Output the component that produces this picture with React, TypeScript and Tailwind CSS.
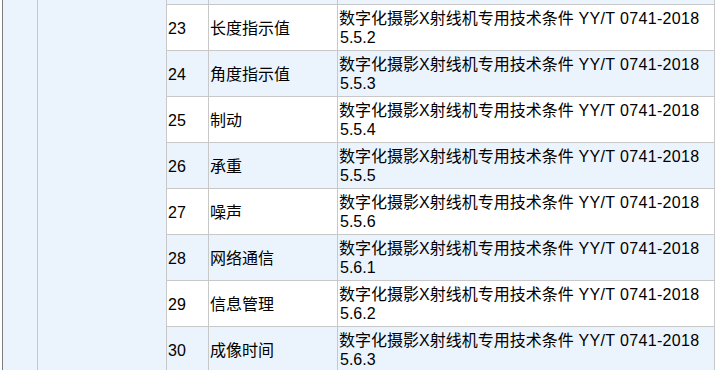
import React from "react";

const rows = [
  { n: "23", name: "长度指示值", sec: "5.5.2" },
  { n: "24", name: "角度指示值", sec: "5.5.3" },
  { n: "25", name: "制动", sec: "5.5.4" },
  { n: "26", name: "承重", sec: "5.5.5" },
  { n: "27", name: "噪声", sec: "5.5.6" },
  { n: "28", name: "网络通信", sec: "5.6.1" },
  { n: "29", name: "信息管理", sec: "5.6.2" },
  { n: "30", name: "成像时间", sec: "5.6.3" },
];

export default function App() {
  return (
    <div
      className="w-[717px] h-[370px] overflow-hidden bg-white flex text-[16px] text-black"
      style={{ fontFamily: '"Liberation Sans", Arial, "Noto Sans CJK SC", sans-serif' }}
    >
      <div className="ml-[2px] w-[1px] shrink-0 bg-[#7d7d7d]" />
      <div className="w-[35px] shrink-0 bg-[#ebf4fd] border-r border-[#c8c8c8]" />
      <div className="w-[129px] shrink-0 bg-[#ebf4fd] border-r border-[#c8c8c8]" />
      <div className="w-[548px] shrink-0 flex flex-col border-r border-[#c8c8c8]">
        <div className="h-[4px] shrink-0 flex bg-[#ebf4fd]">
          <div className="w-[42px] border-r border-[#c8c8c8]" />
          <div className="w-[129px] border-r border-[#c8c8c8]" />
          <div className="flex-1" />
        </div>
        {rows.map((r, i) => (
          <div
            key={r.n}
            className={`h-[46px] shrink-0 flex border-t border-[#c8c8c8] ${
              i % 2 === 0 ? "bg-white" : "bg-[#ebf4fd]"
            }`}
          >
            <div className="w-[42px] border-r border-[#c8c8c8] flex items-center pl-[1px] pt-[2px]">
              {r.n}
            </div>
            <div className="w-[129px] border-r border-[#c8c8c8] flex items-center pl-[1px] pt-[2px]">
              {r.name}
            </div>
            <div className="flex-1 flex flex-col justify-center pl-[1px] pt-[1px] leading-[19px] whitespace-nowrap">
              <span>
                数字化摄影X射线机专用技术条件<span className="tracking-[0.35px]"> YY/T 0741-2018</span>
              </span>
              <span className="pl-[1px]">{r.sec}</span>
            </div>
          </div>
        ))}
      </div>
    </div>
  );
}
